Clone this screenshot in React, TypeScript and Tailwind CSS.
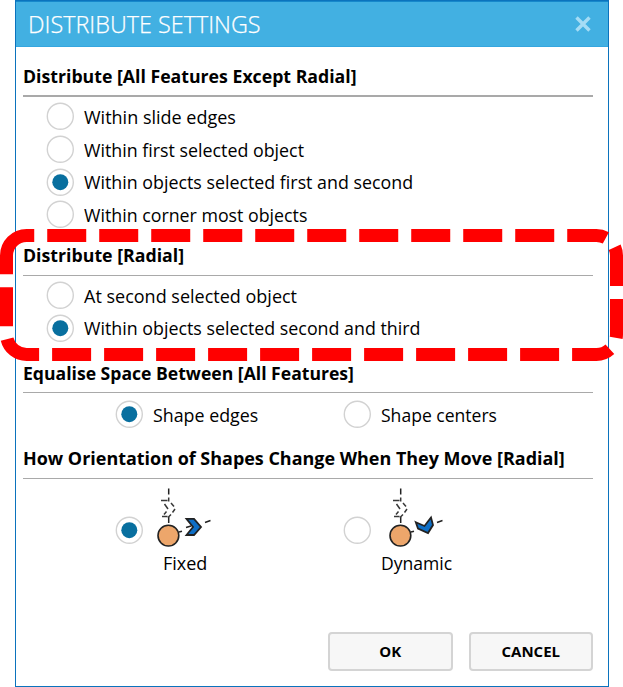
import type { ReactNode } from "react";

function Radio({ checked = false }: { checked?: boolean }) {
  return (
    <svg className="block size-7 shrink-0" viewBox="0 0 28 28">
      <circle cx="14.300" cy="14.200" r="13" fill="#fff" stroke="#d2d2d2" strokeWidth="1.400" />
      {checked && <circle cx="14.300" cy="14.200" r="8" fill="#086f9f" />}
    </svg>
  );
}

function Option({ label, checked, text }: { label: string; checked?: boolean; text: string }) {
  return (
    <label className="flex h-[32.7px] items-center">
      <Radio checked={checked} />
      <span className={`ml-[10px] mt-[1px] origin-left text-[18px] leading-6 ${text}`}>{label}</span>
    </label>
  );
}

function Heading({ children, text, rule }: { children: ReactNode; text: string; rule: string }) {
  return (
    <div className={`border-[#a9a9a9] ${rule}`}>
      <h2 className={`w-max origin-left text-[18px] leading-6 font-bold ${text}`}>{children}</h2>
    </div>
  );
}

function Orientation({ dynamic = false }: { dynamic?: boolean }) {
  return (
    <svg className="block" width="64" height="64" viewBox="0 0 64 64" fill="none" stroke="#222" strokeWidth="1.5">
      <path d="M18.7 3.5v6M18.700 32v6" />
      <path
        d="M11 15.500h6.500M18.700 12.500v4M21 18l3 3.500M25 24l-2.500 3.500M21 29.500l-3 3M17.500 31.500h-5.500M14 29.500l2.500-3M18 24l-3.500-5"
        stroke="#383838"
      />
      <path d="M29 47l3-.8M55 37.500l5.500-2" />
      {dynamic ? (
        <path d="M33.800 37.200l8.700 3.800 6.500-8.500 2 7.500-5 8-10-4.500z" fill="#0f6fc6" strokeWidth="1.8" />
      ) : (
        <>
          <path d="M36 42.500l5-1.500" />
          <path d="M36.500 33.800h7.500l7 8.200-7 8h-7.500l6.500-8z" fill="#0f6fc6" strokeWidth="1.8" />
        </>
      )}
      <circle cx="18.400" cy="50.600" r="10.400" fill="#eda66b" strokeWidth="1.600" />
    </svg>
  );
}

export default function App() {
  return (
    <div className="relative h-[687px] w-[623px] overflow-hidden bg-white pl-[15px] font-['Open_Sans','Noto_Sans',sans-serif] text-black">
      <main className="flex h-[687px] w-[594px] flex-col border border-[#0b73bd] bg-white">
        <header className="flex h-[46px] shrink-0 items-center justify-between border-t border-b border-t-[#1688cb] border-b-[#35a6df] bg-[#42b0e2] pr-[17px] pl-3">
          <h1 className="mt-px text-[23.4px] font-light text-white [-webkit-text-stroke:0.25px_white]">DISTRIBUTE SETTINGS</h1>
          <svg width="16" height="16" viewBox="0 0 16 16" stroke="#a5dcf5" strokeWidth="3.4">
            <path d="M1.500 1.500l13 13M14.500 1.500l-13 13" />
          </svg>
        </header>

        <div className="flex flex-col pt-[17px] pr-[15px] pl-[7px]">
          <Heading text="scale-x-[0.983]" rule="h-[33px] border-b-2">Distribute [All Features Except Radial]</Heading>
          <div className="mt-[3px] flex flex-col pl-[23px]">
            <Option label="Within slide edges" text="" />
            <Option label="Within first selected object" text="scale-x-[0.99]" />
            <Option label="Within objects selected first and second" checked text="scale-x-[0.99]" />
            <Option label="Within corner most objects" text="scale-x-[0.988]" />
          </div>

          <div className="mt-[12px]">
            <Heading text="scale-x-[0.985]" rule="h-[33px] border-b">Distribute [Radial]</Heading>
          </div>
          <div className="mt-[3px] flex flex-col pl-[23px]">
            <Option label="At second selected object" text="" />
            <Option label="Within objects selected second and third" checked text="scale-x-[0.99]" />
          </div>

          <div className="mt-[17px]">
            <Heading text="scale-x-[0.977]" rule="h-[32px] border-b">Equalise Space Between [All Features]</Heading>
          </div>
          <div className="mt-[5px] grid grid-cols-[228px_1fr] pl-[92px]">
            <Option label="Shape edges" checked text="scale-x-[0.99]" />
            <Option label="Shape centers" text="scale-x-[0.975]" />
          </div>

          <div className="mt-[15px]">
            <Heading text="scale-x-[0.997]" rule="h-[33px] border-b">How Orientation of Shapes Change When They Move [Radial]</Heading>
          </div>
          <div className="mt-[6px] flex pl-[92px]">
            <div className="flex w-[228px]">
              <div className="mt-[31px]"><Radio checked /></div>
              <div className="ml-[7px]">
                <Orientation />
                <div className="mt-[2px] ml-[13px] w-max text-[18px] leading-6">Fixed</div>
              </div>
            </div>
            <div className="flex">
              <div className="mt-[31px]"><Radio /></div>
              <div className="ml-[11px]">
                <Orientation dynamic />
                <div className="mt-[2px] -ml-px w-max origin-left scale-x-[0.975] text-[18px] leading-6">Dynamic</div>
              </div>
            </div>
          </div>
        </div>

        <footer className="mt-auto mb-[15px] flex justify-end gap-4 pr-[15px] text-[15px] font-bold">
          <button className="h-[39px] w-[124.5px] rounded-[4px] border-2 border-[#d4d4d4] bg-[#f7f7f7]">OK</button>
          <button className="h-[39px] w-[124.5px] rounded-[4px] border-2 border-[#d4d4d4] bg-[#f7f7f7]">CANCEL</button>
        </footer>
      </main>

      <svg className="pointer-events-none absolute top-0 left-0" width="623" height="687" fill="none">
        <path
          d="M6.500 255.600A20.100 20.100 0 0 1 26.600 235.500H596.400A20.100 20.100 0 0 1 616.500 255.600V334.400A20.100 20.100 0 0 1 596.400 354.500H26.600A20.100 20.100 0 0 1 6.500 334.400Z"
          stroke="#ff0000"
          strokeWidth="13"
          strokeDasharray="39 13"
        />
      </svg>
    </div>
  );
}
